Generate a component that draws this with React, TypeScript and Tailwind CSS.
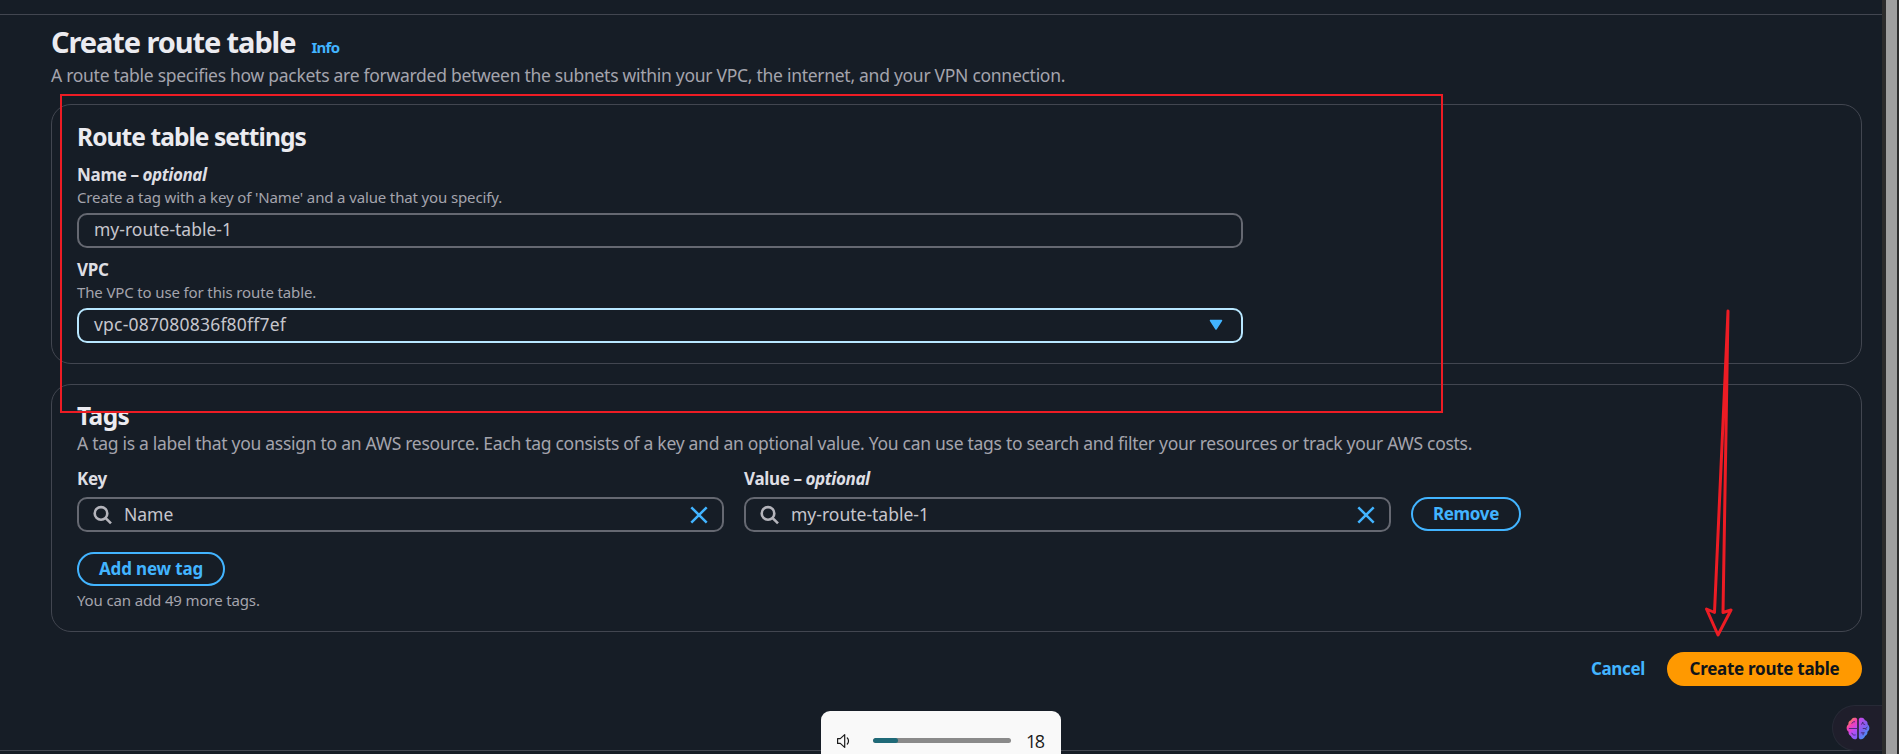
import type { ReactNode } from "react";

function SearchIcon() {
  return (
    <svg className="h-5 w-5 shrink-0" viewBox="0 0 20 20" fill="none" stroke="#b4b4bb" strokeWidth="2.6">
      <circle cx="8" cy="8.4" r="6.3" />
      <path d="M12.400 12.800L18 18.400" />
    </svg>
  );
}

function CloseIcon() {
  return (
    <svg className="h-5 w-5 shrink-0" viewBox="0 0 20 20" fill="none" stroke="#42b4ff" strokeWidth="2.5">
      <path d="M2.300 2.300L17.700 17.700M17.700 2.300L2.300 17.700" />
    </svg>
  );
}

function BrainIcon() {
  return (
    <svg className="h-[23px] w-[24px]" viewBox="0 0 25 24">
      <defs>
        <linearGradient id="brainLeft" x1="0.1" y1="0" x2="0.6" y2="1">
          <stop offset="0.05" stopColor="#f9a13a" />
          <stop offset="0.4" stopColor="#f43fb0" />
          <stop offset="0.7" stopColor="#c04af0" />
          <stop offset="1" stopColor="#8b5cf6" />
        </linearGradient>
        <linearGradient id="brainRight" x1="0.2" y1="0" x2="0.8" y2="1">
          <stop offset="0" stopColor="#c548e6" />
          <stop offset="0.5" stopColor="#7a63f2" />
          <stop offset="1" stopColor="#35a7f5" />
        </linearGradient>
      </defs>
      <path fill="url(#brainLeft)" d="M11.7 2.6C11.7 1 9.9 .6 8.3 .9 6.6 1.200 5.600 2.300 5.300 3.500 3.300 4 2.200 5.600 2.500 7.600 1 8.700 .4 10.400 .7 12.200 .9 13.700 1.700 14.800 2.700 15.500 2.300 17.500 3.400 19.300 5.100 19.900 5.700 22 7.400 23.200 9.200 23.200 10.800 23.200 11.700 22.300 11.700 21Z" />
      <path fill="url(#brainRight)" d="M13.300 2.600C13.300 1 15.100 .6 16.700 .9 18.400 1.200 19.400 2.300 19.700 3.500 21.700 4 22.800 5.600 22.500 7.600 24 8.700 24.600 10.400 24.300 12.200 24.100 13.700 23.300 14.800 22.300 15.500 22.700 17.500 21.600 19.300 19.900 19.900 19.300 22 17.600 23.200 15.800 23.200 14.200 23.200 13.300 22.300 13.300 21Z" />
      <g fill="none" stroke="#4a2a7a" strokeWidth="1">
        <path d="M6 7C6.500 5.300 8 4.700 9.400 5M3 12H11.500M6 16.500C6.500 18.500 8 19.200 10 18.700" />
        <path d="M16 8L17.600 5.200M17.600 5.200V7L20 8M17.500 12H20.500L22.300 10.500M20.500 12L21 13.500M15.500 16.500H19.500M17.800 16.500V19" />
      </g>
    </svg>
  );
}

function Label({ children, optional }: { children: ReactNode; optional?: boolean }) {
  return (
    <div className="h-6 whitespace-nowrap text-[17px] leading-6 font-bold tracking-[-0.3px] text-[#dedee3]">
      {children}
      {optional && (
        <>
          <span className="tracking-[-0.5px]"> – </span>
          <i className="tracking-[-0.4px]">optional</i>
        </>
      )}
    </div>
  );
}

function Hint({ children }: { children: ReactNode }) {
  return <p className="h-5 whitespace-nowrap text-[15px] leading-5 tracking-[-0.137px] text-[#a4a4ad]">{children}</p>;
}

function SearchField({ value }: { value: string }) {
  return (
    <div className="flex h-[35px] items-center rounded-[10px] border-2 border-[#656871] pr-[13px] pl-[14px]">
      <SearchIcon />
      <span className="ml-[11px] grow text-[17.5px] leading-[31px] text-[#c6c6cd]">{value}</span>
      <CloseIcon />
    </div>
  );
}

export default function App() {
  return (
    <div className="relative flex h-[754px] w-[1899px] overflow-hidden bg-[#161d26] font-['Noto_Sans',sans-serif]">
      <main className="flex h-[751px] w-[1882px] flex-col border-b border-[#424650]">
        <div className="h-[15px] shrink-0 border-b border-[#424650]" />
        <div className="mt-[9px] ml-[51px] w-[1811px]">
          <div className="flex h-9 items-baseline">
            <h1 className="text-[29px] leading-9 font-bold tracking-[-1.1px] text-[#ebebf0]">Create route table</h1>
            <a className="ml-[16px] text-[15px] font-bold tracking-[-0.7px] text-[#42b4ff]">Info</a>
          </div>
          <p className="mt-[3px] text-[17.5px] leading-[25px] tracking-[-0.282px] text-[#a4a4ad]">
            A route table specifies how packets are forwarded between the subnets within your VPC, the internet, and your VPN connection.
          </p>

          <section className="mt-4 h-[260px] rounded-[20px] border border-[#424650] px-[25px] pt-[17px]">
            <h2 className="text-[24.5px] leading-[30px] font-bold tracking-[-0.92px] text-[#ebebf0]">Route table settings</h2>
            <div className="mt-[11px] w-[1166px]">
              <Label optional>Name</Label>
              <Hint>Create a tag with a key of 'Name' and a value that you specify.</Hint>
              <div className="mt-[6px] h-[35px] rounded-[10px] border-2 border-[#656871] px-[15px] text-[17.5px] leading-[29px] text-[#c6c6cd]">
                my-route-table-1
              </div>
            </div>
            <div className="mt-[10px] w-[1166px]">
              <Label>VPC</Label>
              <Hint>The VPC to use for this route table.</Hint>
              <div className="mt-[6px] flex h-[35px] justify-between rounded-[10px] border-2 border-[#b8e7ff] pr-[18px] pl-[15px] text-[17.5px] leading-[29px] tracking-[0.2px] text-[#c6c6cd]">
                vpc-087080836f80ff7ef
                <svg className="mt-[9px] h-[12px] w-[14px]" viewBox="0 0 14 12">
                  <path d="M1.500 1.500H12.500L7 10Z" fill="#42b4ff" stroke="#42b4ff" strokeWidth="1.500" strokeLinejoin="round" />
                </svg>
              </div>
            </div>
          </section>

          <section className="mt-5 h-[248px] rounded-[20px] border border-[#424650] px-[25px] pt-[16px]">
            <h2 className="text-[24.5px] leading-[30px] font-bold tracking-[-0.6px] text-[#ebebf0]">Tags</h2>
            <p className="text-[17.5px] leading-[25px] tracking-[-0.285px] whitespace-nowrap text-[#a4a4ad]">
              A tag is a label that you assign to an AWS resource. Each tag consists of a key and an optional value. You can use tags to search and filter your resources or track your AWS costs.
            </p>
            <div className="mt-[11px] flex items-end gap-5">
              <div className="flex w-[647px] flex-col gap-[6px]">
                <Label>Key</Label>
                <SearchField value="Name" />
              </div>
              <div className="flex w-[647px] flex-col gap-[6px]">
                <Label optional>Value</Label>
                <SearchField value="my-route-table-1" />
              </div>
              <button className="mb-px h-[34px] w-[110px] rounded-full border-2 border-[#42b4ff] text-[17px] leading-[30px] font-bold tracking-[-0.33px] text-[#42b4ff]">
                Remove
              </button>
            </div>
            <button className="mt-5 block h-[34px] w-[148px] rounded-full border-2 border-[#42b4ff] text-[17px] leading-[30px] font-bold tracking-[-0.16px] text-[#42b4ff]">
              Add new tag
            </button>
            <div className="mt-[4px]">
              <Hint>You can add 49 more tags.</Hint>
            </div>
          </section>

          <div className="mt-5 flex h-[34px] items-center justify-end text-[17px] leading-[34px] font-bold">
            <button className="mr-[22px] tracking-[-0.35px] text-[#42b4ff]">Cancel</button>
            <button className="h-[34px] w-[195px] rounded-full bg-[#ff9900] tracking-[-0.27px] text-[#0f141a]">Create route table</button>
          </div>
        </div>
      </main>
      <aside className="flex h-full w-[17px] border-l-4 border-[#2c2c2c]">
        <div className="h-full w-[11px] bg-[#9f9f9f]" />
        <div className="h-full w-[2px] bg-[#2c2c2c]" />
      </aside>

      <div className="absolute top-[705px] left-[1832px] flex h-[46px] w-[50px] items-center rounded-l-full border border-r-0 border-[#272a36] bg-[#1f1e2b] pt-px pl-[13px]">
        <BrainIcon />
      </div>

      <div className="absolute top-[711px] left-[821px] flex h-[60px] w-[240px] rounded-[9px] bg-[#f9f9f9] pt-[20px] pl-[15px]">
        <svg className="mt-[2px] h-4 w-4 shrink-0" viewBox="0 0 16 16" fill="none" stroke="#1b1b1b" strokeWidth="1.2" strokeLinejoin="round" strokeLinecap="round">
          <path d="M1.600 5.600H4.300L8.700 1.600V14.400L4.300 10.400H1.600Z" />
          <path d="M11.300 5C12.900 6.500 12.900 9.500 11.300 11" />
        </svg>
        <div className="mt-[7px] ml-[21px] h-[5px] w-[138px] overflow-hidden rounded-full bg-[#8a8a8a]">
          <div className="h-full w-[25px] rounded-full bg-[#1f6a78]" />
        </div>
        <span className="-mt-px ml-[15px] font-['Open_Sans',sans-serif] text-[18px] leading-[22px] tracking-[-1.5px] text-[#1b1b1b]">18</span>
      </div>

      <div className="absolute top-[94px] left-[60px] h-[319px] w-[1383px] border-2 border-[#ed1c24]" />
      <svg className="absolute top-[300px] left-[1695px] h-[345px] w-[50px]" viewBox="1695 300 50 345" fill="none" stroke="#ed1c24" strokeWidth="3" strokeLinejoin="round">
        <path d="M1728 311L1714.500 612.500L1706.500 609L1718 635L1731 610L1723 612.500Z" />
      </svg>
    </div>
  );
}
